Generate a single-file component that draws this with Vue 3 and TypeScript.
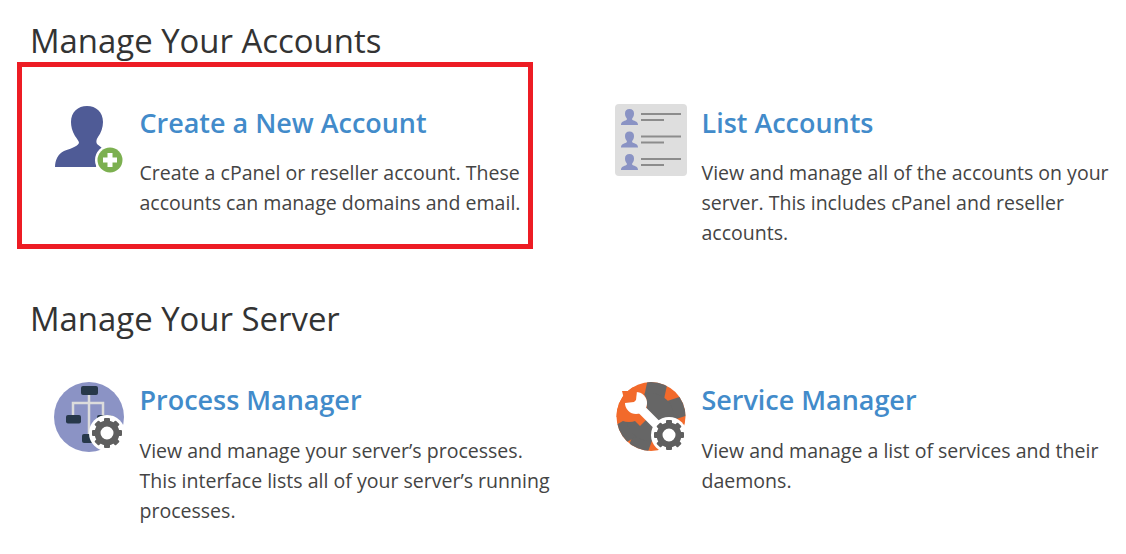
<script setup lang="ts">
const gearAngles = [0, 45, 90, 135, 180, 225, 270, 315];
const listRows = [0, 22.5, 45];
const bigTeeth = [12, 72, 130, 200, 240];
</script>

<template>
  <main class="page">
    <h2 class="heading first">Manage Your Accounts</h2>
    <div class="grid">
      <div class="item marked">
        <svg class="icon" viewBox="0 0 70 70">
          <path fill="#4f5b96" d="M1 63C1 56 4 50 10 47C15 45 23 43 25 39C25 37 23 35 21 32C18 27 17 22 17 18C17 8 24 2 33 2C42 2 49 8 49 18C49 23 47 29 44 33C42 36 42 38 43 40L48 44L42 63z"/>
          <circle cx="56" cy="56" r="15" fill="#fff"/>
          <circle cx="56" cy="56" r="12.500" fill="#7cb050"/>
          <path fill="#fff" d="M53.500 49h5v4.500H63v5h-4.500V63h-5v-4.500H49v-5h4.500z"/>
        </svg>
        <div class="body">
          <a class="title">Create a New Account</a>
          <p class="desc">Create a cPanel or reseller account. These accounts can manage domains and email.</p>
        </div>
      </div>
      <div class="item">
        <svg class="icon list" viewBox="0 0 72 72">
          <rect width="72" height="72" rx="4" fill="#dedede"/>
          <g v-for="y in listRows" :key="y" :transform="`translate(0 ${y})`">
            <path fill="#8a93c4" d="M6 21c0-3 2-3.500 4.500-4.500 1.500-.6 1.800-1.500 1-2.500-1-1.200-1.500-2.700-1.500-4.500 0-2.800 1.600-4.500 4.500-4.500s4.500 1.700 4.500 4.500c0 1.800-.5 3.300-1.500 4.500-.8 1-.5 1.900 1 2.500 2.500 1 4.500 1.500 4.500 4.500z"/>
            <rect x="26" y="9" width="40" height="2" fill="#8c8c8c"/>
            <rect x="26" y="15" width="23" height="2" fill="#8c8c8c"/>
          </g>
        </svg>
        <div class="body">
          <a class="title">List Accounts</a>
          <p class="desc">View and manage all of the accounts on your server. This includes cPanel and reseller accounts.</p>
        </div>
      </div>
    </div>
    <h2 class="heading second">Manage Your Server</h2>
    <div class="grid lower">
      <div class="item">
        <svg class="icon" viewBox="0 0 70 70">
          <circle cx="35" cy="35" r="35" fill="#8b93c5"/>
          <path fill="none" stroke="#dcdcdc" stroke-width="2.500" d="M35 12v46M19 34V21h30v13"/>
          <rect x="27" y="4" width="17" height="9" rx="2" fill="#27384a"/>
          <rect x="12" y="33" width="15" height="8.500" rx="2" fill="#27384a"/>
          <rect x="43" y="33" width="15" height="8.500" rx="2" fill="#27384a"/>
          <rect x="28" y="52" width="13" height="9" rx="2" fill="#27384a"/>
          <circle cx="53" cy="51" r="18" fill="#fff"/>
          <g transform="translate(53 51)">
            <g fill="#5f5f5f">
              <rect v-for="a in gearAngles" :key="a" x="-3" y="-15" width="6" height="7" rx="1" :transform="`rotate(${a})`"/>
            </g>
            <circle r="9.500" fill="none" stroke="#5f5f5f" stroke-width="6"/>
          </g>
        </svg>
        <div class="body">
          <a class="title">Process Manager</a>
          <p class="desc">View and manage your server’s processes. This interface lists all of your server’s running processes.</p>
        </div>
      </div>
      <div class="item">
        <svg class="icon" viewBox="0 0 70 70">
          <clipPath id="svc"><circle cx="35" cy="34.500" r="34.500"/></clipPath>
          <circle cx="35" cy="34.500" r="34.500" fill="#f26a2b"/>
          <g clip-path="url(#svc)">
            <g transform="translate(34 35)" fill="#666">
              <rect v-for="a in bigTeeth" :key="a" x="-10" y="-40" width="20" height="22" :transform="`rotate(${a})`"/>
              <circle r="24"/>
            </g>
            <circle cx="13" cy="22" r="18" fill="#f26a2b"/>
            <path stroke="#f26a2b" stroke-width="17" d="M16 24L30 38"/>
          </g>
          <path stroke="#fff" stroke-width="9" d="M20 22L45 47"/>
          <circle cx="20" cy="21" r="11" fill="#fff"/>
          <path fill="#f26a2b" d="M21 9L20 18L18 20L9 21L6 9z"/>
          <circle cx="53" cy="53" r="18" fill="#fff"/>
          <g transform="translate(53 53)">
            <g fill="#5f5f5f">
              <rect v-for="a in gearAngles" :key="a" x="-3" y="-15" width="6" height="7" rx="1" :transform="`rotate(${a})`"/>
            </g>
            <circle r="9.500" fill="none" stroke="#5f5f5f" stroke-width="6"/>
          </g>
        </svg>
        <div class="body">
          <a class="title">Service Manager</a>
          <p class="desc">View and manage a list of services and their daemons.</p>
        </div>
      </div>
    </div>
  </main>
</template>

<style>
html, body { background: #fff; }
</style>

<style scoped>
.page {
  width: 1126px;
  height: 554px;
  overflow: hidden;
  box-sizing: border-box;
  padding: 0 0 0 30px;
  font-family: "Open Sans", sans-serif;
}
.heading {
  margin: 0;
  font-size: 32.900px;
  font-weight: 400;
  color: #333;
}
.first { margin-top: 19px; line-height: 44px; }
.second { margin-top: 50px; line-height: 42px; }
.grid {
  display: grid;
  grid-template-columns: 562px 1fr;
}
.item {
  display: flex;
  gap: 15.500px;
  padding: 38px 0 0 24px;
  min-height: 185px;
  box-sizing: border-box;
}
.marked { position: relative; }
.marked::before {
  content: "";
  position: absolute;
  left: -13px;
  top: -1px;
  width: 516px;
  height: 187px;
  border: 5px solid #ed1c24;
  box-sizing: border-box;
}
.icon {
  width: 70px;
  height: 70px;
  flex: none;
  margin-top: 3px;
  filter: blur(0.4px);
}
.lower .icon { margin-top: 4px; }
.list { width: 72px; height: 72px; margin-right: -1px; margin-left: -1px; }
.body { width: 412px; }
.title {
  display: block;
  font-size: 26.950px;
  line-height: 44px;
  font-weight: 600;
  color: #428bca;
}
.desc {
  margin: 13px 0 0;
  font-size: 19.550px;
  line-height: 30px;
  color: #444;
}
.lower .desc { margin-top: 14px; }
</style>
